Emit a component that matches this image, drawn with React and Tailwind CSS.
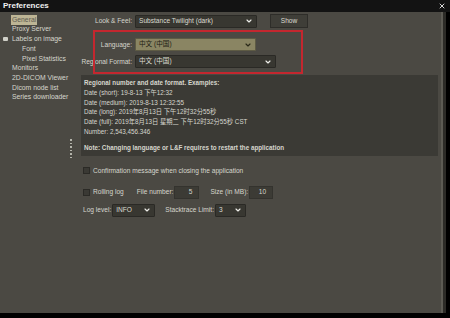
import { ChevronDown, X } from "lucide-react";

const font = { fontFamily: '"Liberation Sans", "Noto Sans CJK SC", Arial, sans-serif' };

function Combo({ value, width, hl }) {
  return (
    <div
      className={`flex items-center justify-between h-[13px] pl-[3px] pr-[3px] border rounded-[1px] ${
        hl
          ? "bg-[#8a8563] border-[#5e5b44] text-[#1e1d14]"
          : "bg-[#383731] border-[#2a2925] text-[#dcdcd2]"
      } ${width}`}
    >
      <span className="leading-none whitespace-nowrap">{value}</span>
      <ChevronDown size={8} strokeWidth={3.5} className={hl ? "text-[#2a2918]" : "text-[#eeeeea]"} />
    </div>
  );
}

function Check({ label }) {
  return (
    <div className="flex items-center gap-[3px] whitespace-nowrap">
      <div className="w-[7px] h-[7px] bg-[#3a3934] border border-[#2b2a26]" />
      <span>{label}</span>
    </div>
  );
}

function Field({ value, width }) {
  return (
    <div className={`h-[13px] bg-[#3c3b35] border border-[#34332e] flex items-center justify-end pr-[6px] ${width}`}>
      {value}
    </div>
  );
}

export default function App() {
  const nav = [
    ["General", 0, true],
    ["Proxy Server", 0],
    ["Labels on image", 0, false, true],
    ["Font", 1],
    ["Pixel Statistics", 1],
    ["Monitors", 0],
    ["2D-DICOM Viewer", 0],
    ["Dicom node list", 0],
    ["Series downloader", 0],
  ];

  return (
    <div className="w-[450px] h-[318px] bg-black overflow-hidden text-[6.6px] text-[#d6d6cd]" style={font}>
      {/* Title bar */}
      <div className="h-[12px] flex items-center justify-between pl-[3px] pr-[4px] bg-[#131313]">
        <span className="text-[8px] font-bold text-[#f0f0f0]">Preferences</span>
        <X size={8} strokeWidth={3} className="text-[#d8d8d8]" />
      </div>

      <div className="flex h-[301px]">
        <div className="flex w-[441px] bg-[#4b4943]">
          {/* Sidebar */}
          <div className="w-[68px] shrink-0 pt-[3px] flex flex-col text-[6.8px]">
            {nav.map(([name, lvl, sel, icon]) => (
              <div
                key={name}
                className={`h-[9.7px] flex items-center whitespace-nowrap ${lvl ? "pl-[22px]" : "pl-[12px]"} relative`}
              >
                {icon && <div className="absolute left-[3px] top-[3px] w-[5px] h-[4px] bg-[#d0d0c8] rounded-[1px]" />}
                <span className={sel ? "bg-[#bdb595] text-[#5d5b50] px-[1px] -ml-[1px]" : ""}>{name}</span>
              </div>
            ))}
          </div>

          {/* Divider dots */}
          <div className="w-[6px] shrink-0 pt-[127px] flex flex-col items-center gap-[2px]">
            {[0, 1, 2, 3, 4, 5].map((i) => (
              <div key={i} className="w-[2px] h-[1.5px] bg-[#b5b5ac]" />
            ))}
          </div>

          {/* Content */}
          <div className="flex-1 flex flex-col pl-[5px] pr-[3px] relative">
            <div className="absolute left-[19px] top-[18px] w-[210px] h-[44px] border-2 border-[#c4272f] pointer-events-none" />

            <div className="flex items-center mt-[2px]">
              <span className="w-[56px] text-right pr-[3px] whitespace-nowrap">Look &amp; Feel:</span>
              <Combo value="Substance Twilight (dark)" width="w-[122px]" />
              <div className="ml-[13px] w-[38px] h-[14px] bg-[#3f3e38] border border-[#2e2d29] flex items-center justify-center text-[#dcdcd2]">
                Show
              </div>
            </div>

            <div className="flex items-center mt-[10px]">
              <span className="w-[56px] text-right pr-[3px] whitespace-nowrap">Language:</span>
              <Combo value="中文 (中国)" width="w-[121px]" hl />
            </div>

            <div className="flex items-center mt-[4px]">
              <span className="w-[56px] text-right pr-[3px] whitespace-nowrap">Regional Format:</span>
              <Combo value="中文 (中国)" width="w-[141px]" />
            </div>

            <div className="mt-[7px] ml-[2px] mr-[0px] h-[81px] bg-[#3b3a35] pl-[3px] pt-[3px] flex flex-col text-[6.3px] leading-[9.8px]">
              <span className="font-bold">Regional number and date format. Examples:</span>
              <span>Date (short): 19-8-13 下午12:32</span>
              <span>Date (medium): 2019-8-13 12:32:55</span>
              <span>Date (long): 2019年8月13日 下午12时32分55秒</span>
              <span>Date (full): 2019年8月13日 星期二 下午12时32分55秒 CST</span>
              <span>Number: 2,543,456.346</span>
              <span className="font-bold mt-[6px]">Note: Changing language or L&amp;F requires to restart the application</span>
            </div>

            <div className="mt-[10px] ml-[4px]">
              <Check label="Confirmation message when closing the application" />
            </div>

            <div className="mt-[10px] ml-[4px] flex items-center">
              <Check label="Rolling log" />
              <span className="ml-[13px] mr-[1px]">File number:</span>
              <Field value="5" width="w-[25px]" />
              <span className="ml-[11px] mr-[1px]">Size (in MB):</span>
              <Field value="10" width="w-[24px]" />
            </div>

            <div className="mt-[5px] ml-[4px] flex items-center">
              <span className="mr-[1px]">Log level:</span>
              <Combo value="INFO" width="w-[43px]" />
              <span className="ml-[10px] mr-[1px]">Stacktrace Limit:</span>
              <Combo value="3" width="w-[31px]" />
            </div>
          </div>
        </div>
        <div className="w-[2px] bg-[#5d5b54]" />
        <div className="w-[3px] bg-[#2c2b27]" />
      </div>
    </div>
  );
}
